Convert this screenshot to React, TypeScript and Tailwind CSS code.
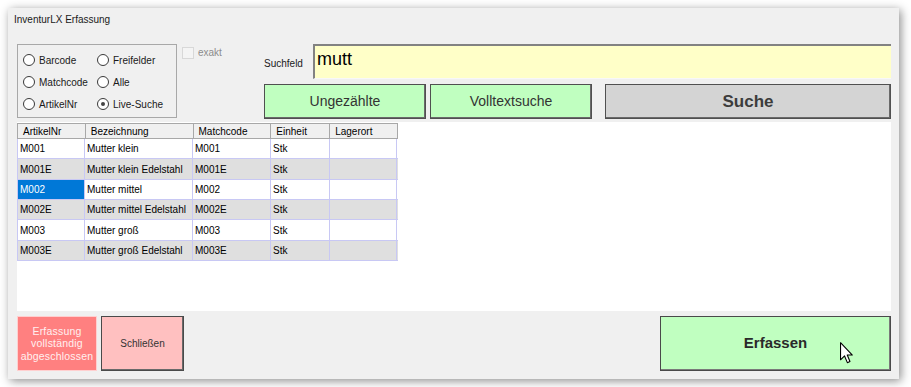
import React from 'react'

const font = "font-['Liberation_Sans',Arial,sans-serif]"

type Row = { nr: string; bez: string; mc: string; einheit: string; ort: string }

const rows: Row[] = [
  { nr: 'M001', bez: 'Mutter klein', mc: 'M001', einheit: 'Stk', ort: '' },
  { nr: 'M001E', bez: 'Mutter klein Edelstahl', mc: 'M001E', einheit: 'Stk', ort: '' },
  { nr: 'M002', bez: 'Mutter mittel', mc: 'M002', einheit: 'Stk', ort: '' },
  { nr: 'M002E', bez: 'Mutter mittel Edelstahl', mc: 'M002E', einheit: 'Stk', ort: '' },
  { nr: 'M003', bez: 'Mutter groß', mc: 'M003', einheit: 'Stk', ort: '' },
  { nr: 'M003E', bez: 'Mutter groß Edelstahl', mc: 'M003E', einheit: 'Stk', ort: '' },
]

const columns = [
  { label: 'ArtikelNr', w: 'w-[68px]' },
  { label: 'Bezeichnung', w: 'w-[108px]' },
  { label: 'Matchcode', w: 'w-[78px]' },
  { label: 'Einheit', w: 'w-[59px]' },
  { label: 'Lagerort', w: 'w-[67px]' },
]

function Radio({ label, checked }: { label: string; checked?: boolean }) {
  return (
    <div className="flex items-center h-[22px]">
      <span className="w-[12px] h-[12px] rounded-full border border-[#3a3a3a] bg-white flex items-center justify-center shrink-0">
        {checked && <span className="w-[4px] h-[4px] rounded-full bg-[#444]" />}
      </span>
      <span className="ml-[4px] text-[10px] text-[#1a1a1a]">{label}</span>
    </div>
  )
}

function Cursor() {
  return (
    <svg className="absolute left-[179px] top-[25px]" width="13" height="22" viewBox="0 0 12 20">
      <path
        d="M0.5 0.5 V16.3 L4.2 12.7 L6.8 18.9 L9.2 17.9 L6.7 11.9 H11.4 Z"
        fill="#fff"
        stroke="#000"
        strokeWidth="1"
        strokeLinejoin="round"
      />
    </svg>
  )
}

export default function App() {
  return (
    <div className={`w-[911px] h-[387px] bg-white pt-[8px] pl-[8px] ${font}`}>
      <div className="w-[891px] h-[371px] bg-[#f0f0f0] flex flex-col shadow-[2px_2px_9px_rgba(0,0,0,0.45)]">
        {/* Title */}
        <div className="h-[36px] pt-[6px] pl-[6px] text-[10px] leading-[12px] text-[#1a1a1a]">InventurLX Erfassung</div>

        {/* Search options */}
        <div className="h-[75px] flex pl-[9px] pr-[8px]">
          <div className="w-[160px] h-[74px] border border-[#a8a8a8] grid grid-cols-[74px_1fr] pl-[5px] pt-[4px] content-start">
            <Radio label="Barcode" />
            <Radio label="Freifelder" />
            <Radio label="Matchcode" />
            <Radio label="Alle" />
            <Radio label="ArtikelNr" />
            <Radio label="Live-Suche" checked />
          </div>

          <div className="w-[86px] pl-[5px] pt-[3px] flex items-start">
            <span className="w-[12px] h-[12px] border border-[#d8d8d8] bg-[#f4f4f4] shrink-0" />
            <span className="ml-[4px] text-[10px] leading-[12px] text-[#8c8c8c]">exakt</span>
          </div>

          <div className="flex-1 flex flex-col">
            <div className="h-[35px] flex items-center">
              <span className="w-[50px] pl-[1px] text-[10px] text-[#1a1a1a] pt-[3px]">Suchfeld</span>
              <div className="flex-1 h-full bg-[#ffffc8] border-t-2 border-l-2 border-[#828282] border-b border-b-[#f8f8f8] pl-[2px] pt-[3px] text-[18px] leading-[20px] text-black">
                mutt
              </div>
            </div>
            <div className="h-[35px] mt-[5px] flex pl-[1px]">
              <button className="w-[162px] h-full bg-[#c0ffc0] border border-[#505050] shadow-[inset_-1px_-1px_0_#6a6a6a] text-[14px] text-[#333]">Ungezählte</button>
              <button className="w-[162px] h-full ml-[4px] bg-[#c0ffc0] border border-[#505050] shadow-[inset_-1px_-1px_0_#6a6a6a] text-[14px] text-[#333]">Volltextsuche</button>
              <button className="flex-1 h-full ml-[13px] bg-[#d4d4d4] border border-[#505050] shadow-[inset_-1px_-1px_0_#6a6a6a] text-[17px] font-bold text-[#3c3c3c]">Suche</button>
            </div>
          </div>
        </div>

        {/* Result grid */}
        <div className="h-[189px] mt-[3px] ml-[9px] mr-[8px] bg-white pt-[1px]">
          <div className="w-[381px] text-[10px] text-black">
            <div className="flex h-[16px] bg-[#f0f0f0] border border-[#a8a8a8]">
              {columns.map((c, i) => (
                <div
                  key={c.label}
                  className={`${c.w} h-full flex items-center pl-[5px] ${i < columns.length - 1 ? 'border-r border-[#a8a8a8]' : ''}`}
                >
                  {c.label}
                </div>
              ))}
            </div>
            {rows.map((r, ri) => {
              const cells = [r.nr, r.bez, r.mc, r.einheit, r.ort]
              return (
                <div
                  key={r.nr}
                  className={`flex ${ri % 3 === 1 ? 'h-[21px]' : 'h-[20px]'} border-l border-b border-[#c8c8f4] ${ri % 2 === 1 ? 'bg-[#dfdfdf]' : 'bg-white'}`}
                >
                  {cells.map((v, ci) => {
                    const selected = ri === 2 && ci === 0
                    return (
                      <div
                        key={ci}
                        className={`${ci === 0 ? 'w-[67px]' : columns[ci].w} h-full flex items-center pl-[2px] border-r border-[#c8c8f4] ${selected ? 'bg-[#0078d7] text-white' : ''}`}
                      >
                        {v}
                      </div>
                    )
                  })}
                </div>
              )
            })}
          </div>
        </div>

        {/* Bottom actions */}
        <div className="h-[55px] mt-[5px] flex pl-[9px] pr-[8px]">
          <button className="w-[80px] h-full bg-[#ff8080] border border-[#ffd0d0] text-[10.5px] leading-[12.5px] text-[#fff0f0] tracking-[0.2px]">
            Erfassung
            <br />
            vollständig
            <br />
            abgeschlossen
          </button>
          <button className="w-[83px] h-full ml-[4px] bg-[#ffc0c0] border border-[#4a4a4a] shadow-[inset_-1px_-1px_0_#6a6a6a] text-[10px] text-[#333]">Schließen</button>
          <button className="relative w-[231px] h-full ml-auto bg-[#c0ffc0] border border-[#4a4a4a] shadow-[inset_-1px_-1px_0_#7a7a7a] text-[15px] font-bold text-[#2a2a2a]">
            Erfassen
            <Cursor />
          </button>
        </div>
      </div>
    </div>
  )
}
